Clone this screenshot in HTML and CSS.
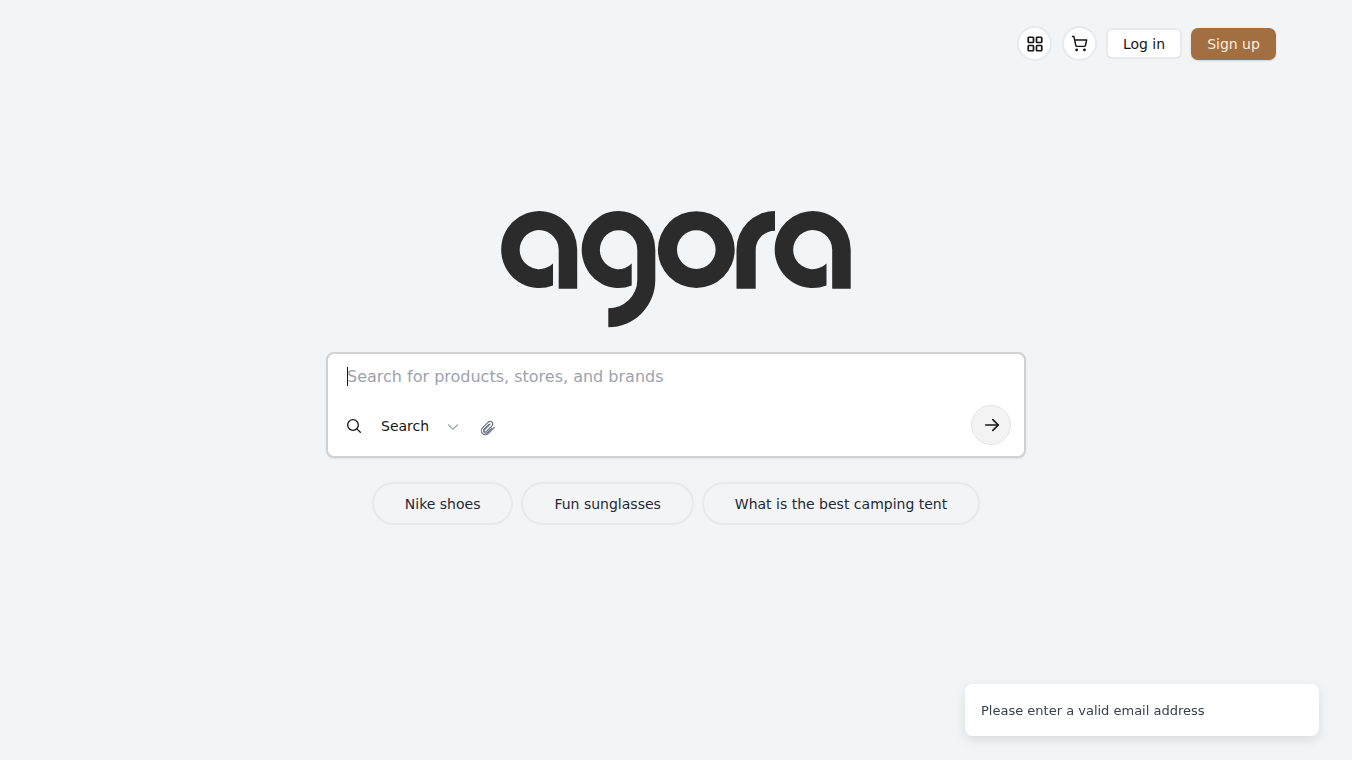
FILE: index.html
```html
<!DOCTYPE html>
<html lang="en">
  <head>
    <meta charset="UTF-8" />
    <meta name="viewport" content="width=device-width, initial-scale=1.0" />
    <title>Agora</title>
    <link rel="stylesheet" href="styles.css">
  </head>

  <body>
    <header class="top-bar">
      <button class="icon-btn apps-btn" aria-label="Apps">
        <svg class="icon-18 grid-icon" viewBox="0 0 24 24">
          <rect x="3" y="3" width="7" height="7" rx="1" />
          <rect x="14" y="3" width="7" height="7" rx="1" />
          <rect x="3" y="14" width="7" height="7" rx="1" />
          <rect x="14" y="14" width="7" height="7" rx="1" />
        </svg>
      </button>
      <button class="icon-btn cart-btn" aria-label="Cart">
        <svg class="cart-icon" viewBox="0 0 24 24">
          <circle cx="8" cy="21" r="1" />
          <circle cx="19" cy="21" r="1" />
          <path d="M2.05 2.05h2l2.66 12.42a2 2 0 0 0 2 1.58h9.78a2 2 0 0 0 1.95-1.57l1.65-7.43H5.12" />
        </svg>
      </button>
      <button class="login-btn">Log in</button>
      <button class="signup-btn">Sign up</button>
    </header>

    <main class="home">
      <svg class="logo" viewBox="0 0 352 118" role="img" aria-label="agora">
        <path id="logo-a" d="M53 75.47A38 38.5 0 1 1 77.2 39.6V78.7H58.7V39.6A19.5 19.5 0 1 0 53 53.4Z" />
        <path d="M131.7 75.5A36.8 38.5 0 1 1 155.3 39.6V70A47 47.3 0 0 1 108.3 117.3V98.3A29 28.3 0 0 0 137.3 70V39.6A18.7 19.5 0 1 0 131.7 53.6Z" />
        <path fill-rule="evenodd" d="M196.3 1.2a38.4 38.4 0 1 0 0 76.8a38.4 38.4 0 1 0 0-76.8ZM196.3 20.3a19.3 19.3 0 1 1 0 38.6a19.3 19.3 0 1 1 0-38.6Z" />
        <path d="M236.5 78.7V39.6A38.5 38.6 0 0 1 275 1V20.7A19.3 19 0 0 0 255.7 39.6V78.7Z" />
        <use href="#logo-a" x="273.5" />
      </svg>

      <form class="search-box">
        <div class="query-row">
          <span class="caret"></span>
          <input class="query" type="text" placeholder="Search for products, stores, and brands" />
        </div>
        <div class="tools-row">
          <div class="mode-group">
            <svg class="search-icon" viewBox="0 0 24 24">
              <circle cx="10.5" cy="10.5" r="8" />
              <path d="m21.5 21.5-5.2-5.2" />
            </svg>
            <span class="mode-label">Search</span>
            <svg class="chevron" viewBox="0 0 24 24">
              <path d="m6 9 6 6 6-6" />
            </svg>
            <svg class="clip" viewBox="0 0 24 24">
              <path d="m21.44 11.05-9.19 9.19a6 6 0 0 1-8.49-8.49l8.57-8.57A4 4 0 1 1 18 8.84l-8.59 8.57a2 2 0 0 1-2.83-2.83l8.49-8.48" />
              <path d="m17.5 12.5-6.6 6.6a3.6 3.6 0 0 1-5-5l7.5-7.5" />
            </svg>
          </div>
          <button class="go-btn" type="button" aria-label="Go">
            <svg class="arrow" viewBox="0 0 24 24">
              <path d="M4.5 12h15" />
              <path d="m13 5.5 6.5 6.5-6.5 6.5" />
            </svg>
          </button>
        </div>
      </form>

      <div class="suggestions">
        <button class="chip">Nike shoes</button>
        <button class="chip">Fun sunglasses</button>
        <button class="chip">What is the best camping tent</button>
      </div>
    </main>

    <div class="toast">Please enter a valid email address</div>
  </body>
</html>
```

FILE: styles.css
```css
* {
  box-sizing: border-box;
}

body {
  margin: 0;
  height: 100vh;
  overflow: hidden;
  background-color: #f3f4f6;
  color: #171717;
  font-family: "DejaVu Sans", sans-serif;
}

button {
  font-family: inherit;
  cursor: pointer;
}

svg {
  fill: none;
  stroke: currentColor;
  stroke-width: 2;
  stroke-linecap: round;
  stroke-linejoin: round;
  flex-shrink: 0;
}

.icon-18 {
  width: 18px;
  height: 18px;
}

.grid-icon {
  stroke-width: 2.3;
}

.cart-icon {
  width: 17px;
  height: 17px;
  margin-right: 1px;
}

.top-bar {
  display: flex;
  justify-content: flex-end;
  align-items: center;
  padding: 26px 76px 0 0;
}

.icon-btn {
  display: flex;
  justify-content: center;
  align-items: center;
  width: 35px;
  height: 35px;
  padding: 0;
  margin-right: 9px;
  background-color: #fff;
  border: 2px solid #e8e9ec;
  border-radius: 50%;
  color: #171717;
}

.apps-btn {
  margin-right: 10px;
}

.login-btn {
  width: 76px;
  height: 31px;
  padding: 0;
  margin-right: 9px;
  background-color: #fff;
  border: 2px solid #e8e9ec;
  border-radius: 6px;
  color: #171717;
  font-size: 14px;
}

.signup-btn {
  width: 85px;
  height: 32px;
  padding: 0;
  background-color: #a26f42;
  border: none;
  border-radius: 7px;
  box-shadow: 0 1px 2px rgba(0, 0, 0, 0.15);
  color: #fdeedd;
  font-size: 14px;
}

.home {
  display: flex;
  flex-direction: column;
  align-items: center;
  padding-top: 149px;
}

.logo {
  display: block;
  width: 352px;
  height: 118px;
  fill: #2b2b2b;
  stroke: none;
}

.search-box {
  width: 700px;
  height: 106px;
  margin-top: 24px;
  padding: 10px 13px 11px 17px;
  background-color: #fff;
  border: 2px solid #d1d1d1;
  border-radius: 8px;
  box-shadow: 0 1px 2px rgba(0, 0, 0, 0.08);
}

.query-row {
  display: flex;
  align-items: center;
  height: 24px;
  padding-left: 2px;
}

.caret {
  width: 1px;
  height: 19px;
  margin-right: -1px;
  background-color: #171717;
}

.query {
  flex: 1;
  height: 24px;
  padding: 0;
  border: none;
  outline: none;
  background: transparent;
  font-family: inherit;
  font-size: 16px;
  color: #171717;
}

.query::placeholder {
  color: #9ca3af;
  opacity: 1;
}

.tools-row {
  display: flex;
  justify-content: space-between;
  align-items: center;
  margin-top: 17px;
}

.mode-group {
  display: flex;
  align-items: center;
  padding-top: 2px;
}

.search-icon {
  width: 16px;
  height: 16px;
  margin: 0 1px;
}

.mode-label {
  margin-left: 18px;
  font-size: 14px;
  color: #171717;
}

.chevron {
  width: 18px;
  height: 18px;
  margin: 2px 0 0 15px;
  color: #9ca3af;
  stroke-width: 1.5;
}

.clip {
  width: 16px;
  height: 16px;
  margin: 3px 0 0 18px;
  color: #6b7280;
  stroke-width: 1.75;
}

.go-btn {
  display: flex;
  justify-content: center;
  align-items: center;
  width: 40px;
  height: 40px;
  padding: 0 0 1px 1px;
  background-color: #f3f3f3;
  border: 1px solid #e5e5e5;
  border-radius: 50%;
  color: #171717;
}

.arrow {
  width: 20px;
  height: 20px;
}

.suggestions {
  display: flex;
  gap: 8px;
  margin-top: 24px;
}

.chip {
  height: 43px;
  padding: 0 31px;
  background: transparent;
  border: 2px solid #e8e9ec;
  border-radius: 22px;
  color: #1f2937;
  font-size: 14px;
}

.toast {
  position: fixed;
  right: 33px;
  bottom: 24px;
  width: 354px;
  height: 52px;
  padding: 1px 16px 0;
  line-height: 52px;
  background-color: #fff;
  border-radius: 8px;
  box-shadow: 0 4px 12px rgba(0, 0, 0, 0.1);
  color: #374151;
  font-size: 13px;
}
```
